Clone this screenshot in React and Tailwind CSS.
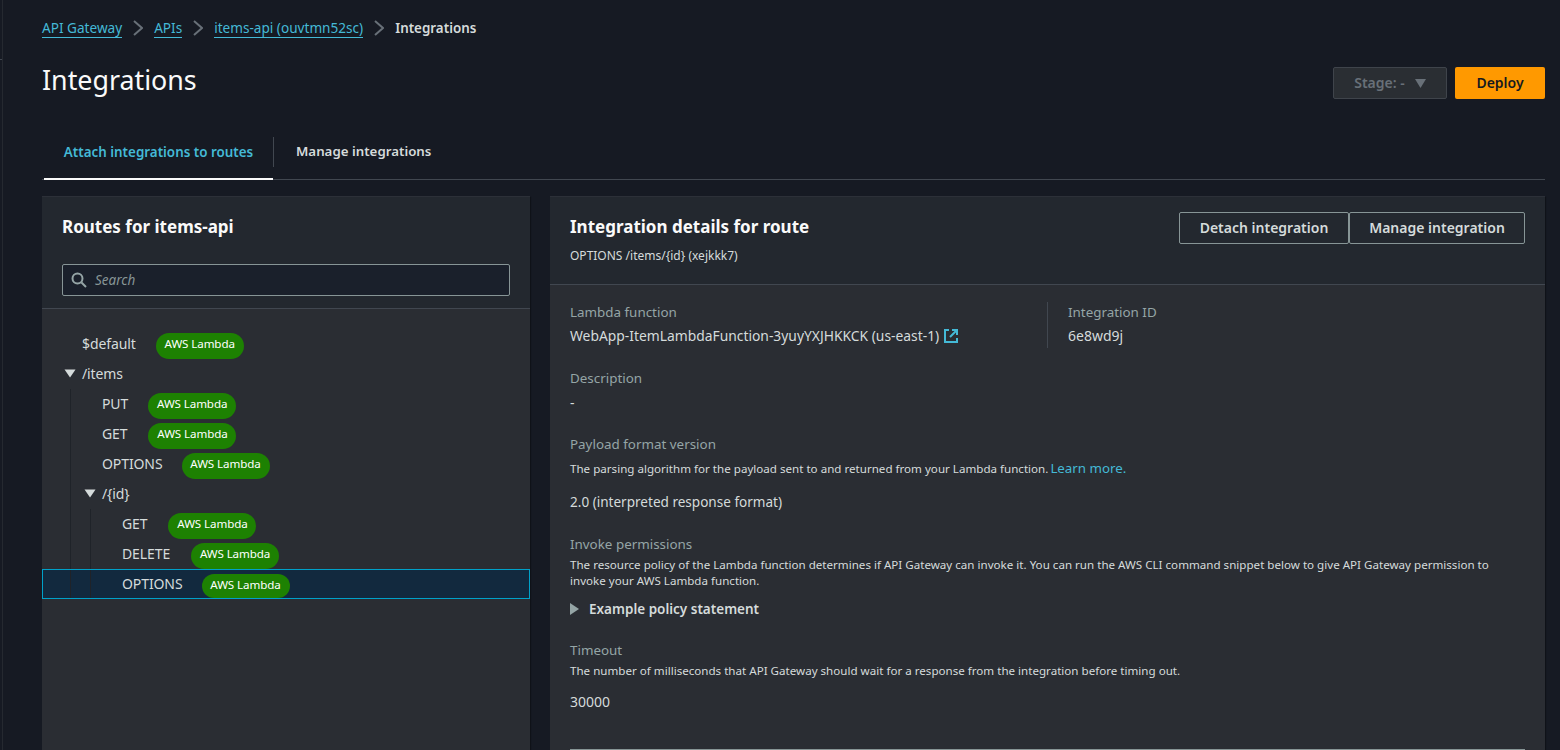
import React from "react";

function Chevron() {
  return (
    <svg width="10" height="16" viewBox="0 0 10 16" fill="none" className="mx-[11px] shrink-0">
      <path d="M1 1l8 7-8 7" stroke="#687078" strokeWidth="2" />
    </svg>
  );
}

function Caret({ className }) {
  return (
    <svg width="12" height="9" viewBox="0 0 12 9" className={className}>
      <path d="M0.5 0.5h11L6 8.5z" fill="#d5dbdb" />
    </svg>
  );
}

function Badge({ selected, gap }) {
  return (
    <span
      className={`mt-[4px] flex w-[88px] shrink-0 items-start justify-center rounded-[13px] bg-[#1d8102] pt-[3px] text-[11.6px] leading-[16px] text-white ${
        selected ? "h-[24px]" : "h-[26px]"
      } ${gap}`}
    >
      AWS Lambda
    </span>
  );
}

function Route({ label, level = 0, selected = false, folder = false, gap = "ml-5" }) {
  const pad = selected
    ? "pl-[79px]"
    : level === 0
    ? "pl-[40px]"
    : level === 1
    ? "pl-[60px]"
    : "pl-[80px]";
  return (
    <div
      className={`relative flex h-[30px] items-center text-sm tracking-[-0.1px] text-[#d5dbdb] ${pad} ${
        selected ? "border border-[#00a1c9] bg-[#12293e]" : ""
      }`}
    >
      {level >= 1 && (
        <span className={`absolute top-0 h-full w-px bg-[#1f2329] ${selected ? "left-[27px]" : "left-[28px]"}`} />
      )}
      {level >= 2 && (
        <span className={`absolute top-0 h-full w-px bg-[#1f2329] ${selected ? "left-[47px]" : "left-[48px]"}`} />
      )}
      {folder && <Caret className="absolute mt-[-1px] ml-[-18px]" />}
      <span>{label}</span>
      {!folder && <Badge selected={selected} gap={gap} />}
    </div>
  );
}

function Field({ label, help, children, className = "" }) {
  return (
    <div className={className}>
      <div className="text-[13.4px] leading-[20px] text-[#95a5a6]">{label}</div>
      {help && <div className="mt-[3px] text-[11.6px] leading-[16px] text-[#d5dbdb]">{help}</div>}
      {children}
    </div>
  );
}

export default function App() {
  const crumb = "border-b border-[#44b9d6] leading-[18px] text-[#44b9d6]";
  return (
    <div
      className="relative h-[750px] w-[1560px] overflow-hidden bg-[#161a23] pl-[42px] pr-[15px] pt-[18px] text-[#d5dbdb]"
      style={{ fontFamily: '"Noto Sans", sans-serif' }}
    >
      {/* edge of the collapsed side navigation */}
      <span className="absolute left-[2px] top-0 h-full w-px bg-[#252930]" />
      <span className="absolute left-0 top-[59px] h-px w-[2px] bg-[#414750]" />

      {/* breadcrumbs */}
      <nav className="flex h-[20px] items-center text-[13.6px] leading-[20px]">
        <a className={crumb}>API Gateway</a>
        <Chevron />
        <a className={crumb}>APIs</a>
        <Chevron />
        <a className={crumb}>items-api (ouvtmn52sc)</a>
        <Chevron />
        <span className="text-[13.4px] font-semibold text-[#d5dbdb]">Integrations</span>
      </nav>

      {/* title */}
      <div className="mt-[24px] flex items-start justify-between">
        <h1 className="text-[26.8px] leading-[36px] text-[#fafafa]">Integrations</h1>
        <div className="mt-[5px] flex gap-2">
          <button className="flex h-[32px] w-[114px] items-center justify-center gap-[10px] rounded-[2px] border border-[#3f444b] bg-[#2a2e33] text-sm font-semibold text-[#687078]">
            Stage: -
            <svg width="11" height="9" viewBox="0 0 11 9"><path d="M0 0h11L5.5 9z" fill="#687078" /></svg>
          </button>
          <button className="h-[32px] w-[90px] rounded-[2px] bg-[#ff9900] text-sm font-semibold text-[#16191f]">Deploy</button>
        </div>
      </div>

      {/* tabs */}
      <div className="mt-[26px] flex h-[55px] items-center border-b border-[#414750] pl-[2px]">
        <div className="relative flex h-[54px] w-[229px] items-center justify-center text-[13.4px] font-semibold text-[#44b9d6]">
          Attach integrations to routes
          <span className="absolute bottom-[-1px] left-0 h-[2px] w-full bg-[#fafafa]" />
        </div>
        <div className="h-[30px] w-px bg-[#414750]" />
        <div className="pl-[22px] text-[13.3px] font-semibold text-[#d5dbdb]">Manage integrations</div>
      </div>

      {/* panels */}
      <div className="mt-[16px] flex h-[600px] gap-[20px]">
        <section className="flex w-[488px] shrink-0 flex-col bg-[#2a2d33] shadow-[1px_1px_1px_rgba(0,0,0,0.3)]">
          <div className="h-[113px] shrink-0 border-b border-[#414750] bg-[#23282f] px-5 pt-[19px] shadow-[inset_0_1px_0_#2c3038]">
            <h2 className="text-[17px] font-bold leading-[24px] text-[#fafafa]">Routes for items-api</h2>
            <div className="mt-[25px] flex h-[32px] items-center rounded-[2px] border border-[#879596] bg-[#1a202b] pl-2">
              <svg width="16" height="16" viewBox="0 0 16 16" fill="none" stroke="#95a5a6" strokeWidth="2">
                <circle cx="6.5" cy="6.5" r="5" />
                <path d="M10.5 10.5L15 15" />
              </svg>
              <span className="ml-[8px] mt-[1px] text-[13.5px] italic text-[#879596]">Search</span>
            </div>
          </div>
          <div className="pt-5">
            <Route label="$default" />
            <Route label="/items" folder />
            <Route label="PUT" level={1} />
            <Route label="GET" level={1} gap="ml-[21px]" />
            <Route label="OPTIONS" level={1} gap="ml-[19px]" />
            <Route label="/{id}" level={1} folder />
            <Route label="GET" level={2} gap="ml-[21px]" />
            <Route label="DELETE" level={2} gap="ml-[21px]" />
            <Route label="OPTIONS" level={2} selected gap="ml-[19px]" />
          </div>
        </section>

        <section className="flex min-w-0 flex-1 flex-col bg-[#2a2d33] shadow-[1px_1px_1px_rgba(0,0,0,0.3)]">
          <div className="flex h-[89px] shrink-0 items-start justify-between border-b border-[#414750] bg-[#23282f] pl-5 pr-5 pt-4 shadow-[inset_0_1px_0_#2c3038]">
            <div>
              <h2 className="mt-[3px] text-[17px] font-bold leading-[24px] text-[#fafafa]">Integration details for route</h2>
              <p className="mt-[9px] text-xs leading-[16px] text-[#d5dbdb]">OPTIONS /items/{"{id}"} (xejkkk7)</p>
            </div>
            <div className="flex">
              <button className="h-[32px] w-[170px] rounded-[2px] border border-[#879596] text-sm font-semibold text-[#d5dbdb]">Detach integration</button>
              <button className="h-[32px] w-[176px] rounded-[2px] border border-[#879596] text-sm font-semibold text-[#d5dbdb]">Manage integration</button>
            </div>
          </div>
          <div className="px-5 pt-[17px]">
            <div className="flex">
              <Field label="Lambda function" className="h-[46px] w-[478px] border-r border-[#414750]">
                <div className="mt-[4px] flex items-center text-[13.85px] leading-[20px]">
                  WebApp-ItemLambdaFunction-3yuyYXJHKKCK (us-east-1)
                  <svg width="14" height="14" viewBox="0 0 14 14" fill="none" stroke="#44b9d6" strokeWidth="2" className="ml-[5px]">
                    <path d="M5 1H1v12h12V9" />
                    <path d="M8 1h5v5M13 1L6 8" />
                  </svg>
                </div>
              </Field>
              <Field label="Integration ID" className="pl-5">
                <div className="mt-[4px] text-sm leading-[20px]">6e8wd9j</div>
              </Field>
            </div>
            <Field label="Description" className="mt-[20px]">
              <div className="mt-[5px] text-sm leading-[20px]">-</div>
            </Field>
            <Field label="Payload format version" className="mt-[21px]">
              <div className="mt-[6px] flex items-baseline text-[11.6px] leading-[16px]">
                The parsing algorithm for the payload sent to and returned from your Lambda function.
                <a className="ml-[2px] text-[13.3px] text-[#44b9d6]">Learn more.</a>
              </div>
              <div className="mt-[15px] text-[13.55px] leading-[20px]">2.0 (interpreted response format)</div>
            </Field>
            <Field
              label="Invoke permissions"
              help="The resource policy of the Lambda function determines if API Gateway can invoke it. You can run the AWS CLI command snippet below to give API Gateway permission to invoke your AWS Lambda function."
              className="mt-[22px]"
            >
              <div className="mt-[10px] flex h-[20px] items-center text-[13.5px] font-semibold">
                <svg width="9" height="12" viewBox="0 0 9 12" className="mr-[10px]"><path d="M0 0l9 6-9 6z" fill="#95a5a6" /></svg>
                Example policy statement
              </div>
            </Field>
            <Field
              label="Timeout"
              help="The number of milliseconds that API Gateway should wait for a response from the integration before timing out."
              className="mt-[21px]"
            >
              <div className="mt-[13px] text-sm leading-[20px]">30000</div>
            </Field>
            <div className="mt-[37px] h-px bg-[#879596]" />
          </div>
        </section>
      </div>
    </div>
  );
}
